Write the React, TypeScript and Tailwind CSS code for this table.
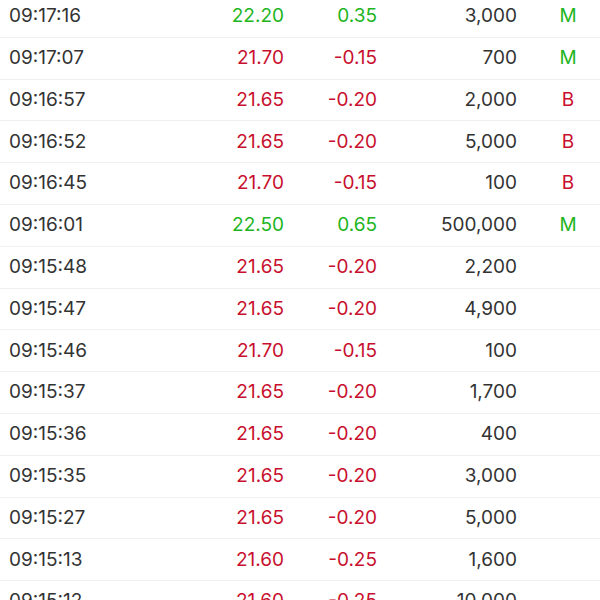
const trades = [
  { time: "09:17:16", price: "22.20", change: "0.35", vol: "3,000", side: "M", up: true },
  { time: "09:17:07", price: "21.70", change: "-0.15", vol: "700", side: "M", up: false },
  { time: "09:16:57", price: "21.65", change: "-0.20", vol: "2,000", side: "B", up: false },
  { time: "09:16:52", price: "21.65", change: "-0.20", vol: "5,000", side: "B", up: false },
  { time: "09:16:45", price: "21.70", change: "-0.15", vol: "100", side: "B", up: false },
  { time: "09:16:01", price: "22.50", change: "0.65", vol: "500,000", side: "M", up: true },
  { time: "09:15:48", price: "21.65", change: "-0.20", vol: "2,200", side: "", up: false },
  { time: "09:15:47", price: "21.65", change: "-0.20", vol: "4,900", side: "", up: false },
  { time: "09:15:46", price: "21.70", change: "-0.15", vol: "100", side: "", up: false },
  { time: "09:15:37", price: "21.65", change: "-0.20", vol: "1,700", side: "", up: false },
  { time: "09:15:36", price: "21.65", change: "-0.20", vol: "400", side: "", up: false },
  { time: "09:15:35", price: "21.65", change: "-0.20", vol: "3,000", side: "", up: false },
  { time: "09:15:27", price: "21.65", change: "-0.20", vol: "5,000", side: "", up: false },
  { time: "09:15:13", price: "21.60", change: "-0.25", vol: "1,600", side: "", up: false },
  { time: "09:15:12", price: "21.60", change: "-0.25", vol: "10,000", side: "", up: false },
];

export default function App() {
  return (
    <div className="w-[600px] h-[600px] overflow-hidden bg-white font-['Inter','Liberation_Sans',sans-serif] text-[19px] text-[#333333]">
      <div className="-mt-[4px]">
        {trades.map((t) => {
          const color = t.up ? "text-[#22b522]" : "text-[#c8102e]";
          return (
            <div key={t.time} className="flex items-center h-[41.8px] border-b border-[#f0f0f0]">
              <div className="w-[200px] pl-[9px]">{t.time}</div>
              <div className={`w-[84px] text-right ${color}`}>{t.price}</div>
              <div className={`w-[93px] text-right ${color}`}>{t.change}</div>
              <div className="w-[140px] text-right">{t.vol}</div>
              <div
                className={`ml-auto w-[64px] text-center ${t.side === "M" ? "text-[#22b522]" : "text-[#c8102e]"}`}
              >
                {t.side}
              </div>
            </div>
          );
        })}
      </div>
    </div>
  );
}
